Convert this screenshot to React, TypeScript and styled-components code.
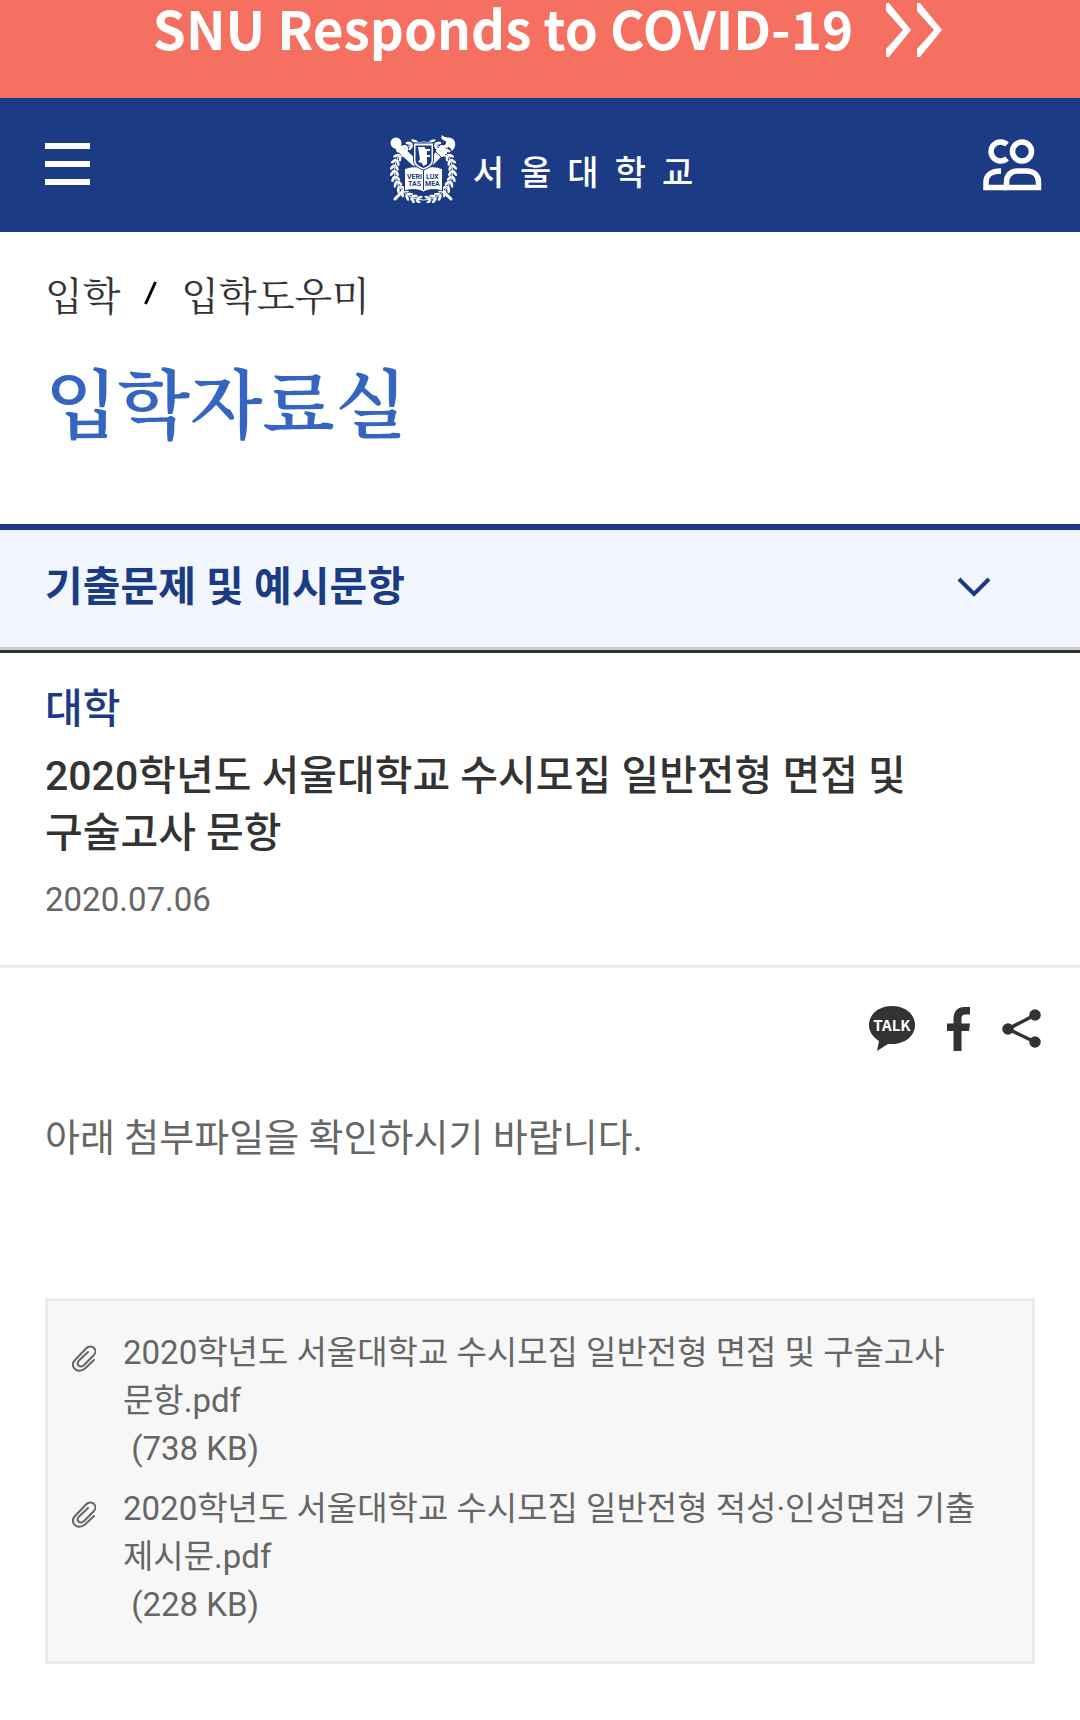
import React from "react";
import styled, { createGlobalStyle } from "styled-components";

const sans = `Roboto, "Noto Sans CJK KR", sans-serif`;
const serif = `"Noto Serif CJK KR", "Nanum Myeongjo", "Noto Sans CJK KR", serif`;
const navy = "#1c3b85";

const GlobalStyle = createGlobalStyle`
  *, *::before, *::after { box-sizing: border-box; }
  body { margin: 0; background: #fff; color: #333; font-family: ${sans}; }
  h1, h2, p, ul, ol { margin: 0; padding: 0; font-weight: 400; }
  ul, ol { list-style: none; }
  a { color: inherit; text-decoration: none; }
  button { padding: 0; border: 0; background: none; color: inherit; font: inherit; cursor: pointer; }
  svg { display: block; flex: none; }
`;

const Banner = styled.a`
  display: flex;
  align-items: flex-start;
  justify-content: center;
  gap: 32px;
  height: 98px;
  padding-left: 16px;
  background: #f57060;
  && { color: #fff; }
  font: 700 53px/54px "Noto Sans CJK KR", "Noto Sans", sans-serif;
`;

const BannerArrows = styled.svg`
  margin-top: 3px;
`;

const Header = styled.header`
  display: grid;
  grid-template-columns: 60px 1fr 60px;
  align-items: center;
  height: 134px;
  padding: 0 38px 0 45px;
  background: ${navy};
  color: #fff;
`;

const MenuButton = styled.button`
  width: 45px;
  height: 45px;
`;

const Logo = styled.a`
  display: flex;
  align-items: center;
  justify-content: center;
  gap: 16px;
  padding: 8px 4px 0 0;
`;

const LogoName = styled.span`
  display: flex;
  gap: 16px;
  padding-top: 4px;
  font: 500 34px/40px "Noto Sans CJK KR", sans-serif;
`;

const PageHead = styled.div`
  padding: 32px 45px 72px;
  font-family: ${serif};
`;

const Crumbs = styled.ol`
  display: flex;
  align-items: center;
  font-size: 39px;
  line-height: 58px;
`;

const Slash = styled.li`
  padding: 0 24px;
`;

const PageTitle = styled.h1`
  && { font-weight: 600; }
  margin-top: 26px;
  color: #3465c1;
  font-size: 75px;
  line-height: 104px;
`;

const CategoryButton = styled.button`
  display: flex;
  align-items: center;
  justify-content: space-between;
  width: 100%;
  height: 126px;
  && { padding: 0 88px 3px 45px; }
  && { border-top: 6px solid ${navy}; border-bottom: 3px solid #ccc; }
  && { background: #f2f7ff; color: ${navy}; }
  && { font-size: 41px; line-height: 57px; font-weight: 700; }
`;

const ArticleHead = styled.header`
  padding: 28px 45px 41px;
  border-top: 3px solid #333;
  border-bottom: 3px solid #ebebeb;
`;

const Category = styled.p`
  && { font-weight: 500; }
  color: ${navy};
  font-size: 41px;
  line-height: 57px;
`;

const ArticleTitle = styled.h2`
  && { font-weight: 500; }
  max-width: 880px;
  margin-top: 10px;
  font-size: 41px;
  line-height: 57px;
  word-break: keep-all;
`;

const PostDate = styled.time`
  display: block;
  margin-top: 14px;
  color: #666;
  font-size: 33px;
  line-height: 48px;
`;

const ShareRow = styled.div`
  display: flex;
  align-items: center;
  justify-content: flex-end;
  gap: 31px;
  padding: 38px 38px 0;
  color: #333;
`;

const Body = styled.p`
  padding: 56px 45px 0;
  color: #666;
  font-size: 38px;
  line-height: 60px;
`;

const Files = styled.ul`
  display: flex;
  flex-direction: column;
  gap: 12px;
  margin: 130px 45px 0;
  padding: 28px 24px 32px;
  border: 3px solid #ebebeb;
  background: #f7f7f7;
`;

const FileItem = styled.li`
  color: #666;
  font-size: 33px;
  line-height: 48px;
`;

const FileLink = styled.a`
  display: flex;
  gap: 27px;
`;

const ClipIcon = styled.svg`
  margin-top: 16px;
`;

const FileName = styled.span`
  display: block;
  word-break: keep-all;
`;

const FileSize = styled.span`
  display: block;
  white-space: pre;
`;

const leaves = Array.from({ length: 15 }, (_, i) => i);

function Seal() {
  return (
    <svg width="67" height="68" viewBox="0 0 67 68" fill="#fff" aria-hidden="true">
      <g stroke="#fff" strokeLinecap="round">
        <path d="M5 9 61 64" strokeWidth="3" />
        <path d="M57 11 5 64" strokeWidth="3" />
        <path d="M9 13 24 27M54 14 42 26" strokeWidth="7" />
      </g>
      <circle cx="6" cy="8" r="5.500" />
      <path d="m45 16 7-7 7 7-7 7z" stroke={navy} strokeWidth="1" />
      <path d="M52 0c4 4 7 1 11 4 4 4 2 9-1 12-1-4-5-5-8-5 3-3 3-5-1-6-2-1-2-3-1-5z" />
      <circle cx="33.500" cy="36" r="29" fill="none" stroke="#fff" strokeWidth="1" />
      {[0, 1].map((side) => (
        <g key={side} transform={side ? "translate(67 0) scale(-1 1)" : undefined}>
          {leaves.map((i) => (
            <g key={i} transform={`rotate(${-12 - i * 11} 33.5 36)`}>
              <ellipse cx="31" cy="4.800" rx="3.400" ry="1.400" transform="rotate(32 31 4.800)" />
              <ellipse cx="31" cy="9.400" rx="3.200" ry="1.300" transform="rotate(-32 31 9.400)" />
            </g>
          ))}
        </g>
      ))}
      <path d="M14.500 34c6-3 14-3 19 0 5-3 13-3 19 0v22c-6-2-14-2-19 1-5-3-13-3-19-1z" stroke={navy} />
      <path d="M33.500 35v20" stroke={navy} strokeWidth="1" />
      <g fill={navy} fontFamily="Roboto, sans-serif" fontWeight="700" fontSize="7">
        <text x="17" y="44">VERI</text>
        <text x="36" y="44">LUX</text>
        <text x="18" y="51">TAS</text>
        <text x="35" y="51">MEA</text>
      </g>
      <path d="M23.500 8h20v17c0 5-4 8-10 10-6-2-10-5-10-10z" stroke={navy} />
      <path d="M25.500 10.500h16V25c0 4-3 6-8 8-5-2-8-4-8-8z" fill={navy} />
      <path d="M28 12h6.500l1 2H40v2h-3v4h3v2h-3v7l-3.500 2-2-3-3.500-1 2-3z" />
    </svg>
  );
}

const files = [
  { name: "2020학년도 서울대학교 수시모집 일반전형 면접 및 구술고사 문항.pdf", size: "738 KB" },
  { name: "2020학년도 서울대학교 수시모집 일반전형 적성·인성면접 기출 제시문.pdf", size: "228 KB" },
];

export default function App() {
  return (
    <>
      <GlobalStyle />
      <Banner href="#covid">
        SNU Responds to COVID-19
        <BannerArrows width="58" height="54" viewBox="0 0 58 54" aria-hidden="true">
          <path fill="#fff" d="M1 0h3l22 27L4 54H1v-8l17-19L1 8zM32 0h3l22 27-22 27h-3v-8l17-19L32 8z" />
        </BannerArrows>
      </Banner>
      <Header>
        <MenuButton type="button" aria-label="메뉴">
          <svg width="45" height="45" viewBox="0 0 45 45" fill="#fff" aria-hidden="true">
            <path d="M0 0h45v6H0zM0 18h45v6H0zM0 36h45v6H0z" />
          </svg>
        </MenuButton>
        <Logo href="#home" aria-label="서울대학교">
          <Seal />
          <LogoName>
            {[..."서울대학교"].map((ch) => (
              <span key={ch}>{ch}</span>
            ))}
          </LogoName>
        </Logo>
        <button type="button" aria-label="사용자별 메뉴">
          <svg width="60" height="52" viewBox="0 0 60 52" fill="none" stroke="#fff" strokeWidth="5.500" aria-hidden="true">
            <circle cx="40" cy="12.500" r="9.500" />
            <path d="M25 5.500A9.500 9.500 0 1 0 25 19.500" />
            <path d="M24.500 48.500V43c0-6 4-11 11-11h9c8 0 12 5 12 11v5.500z" />
            <path d="M25 48.500H4V43c0-6 4-11 15-11" />
          </svg>
        </button>
      </Header>
      <main>
        <PageHead>
          <nav aria-label="현재 위치">
            <Crumbs>
              <li><a href="#admission">입학</a></li>
              <Slash aria-hidden="true">
                <svg width="13" height="24" viewBox="0 0 13 24" stroke="#000" strokeWidth="3" aria-hidden="true">
                  <path d="M11.500 1 1.500 23" />
                </svg>
              </Slash>
              <li><a href="#guide">입학도우미</a></li>
            </Crumbs>
          </nav>
          <PageTitle>입학자료실</PageTitle>
        </PageHead>
        <CategoryButton type="button" aria-expanded="false">
          기출문제 및 예시문항
          <svg width="36" height="22" viewBox="0 0 36 22" fill="none" stroke={navy} strokeWidth="4" aria-hidden="true">
            <path d="m3 3 15 15L33 3" />
          </svg>
        </CategoryButton>
        <article>
          <ArticleHead>
            <Category>대학</Category>
            <ArticleTitle>2020학년도 서울대학교 수시모집 일반전형 면접 및 구술고사 문항</ArticleTitle>
            <PostDate dateTime="2020-07-06">2020.07.06</PostDate>
          </ArticleHead>
          <ShareRow>
            <button type="button" aria-label="카카오톡 공유">
              <svg width="48" height="46" viewBox="0 0 48 46" fill="#333" aria-hidden="true">
                <path d="M24 0C11 0 1 8 1 19c0 7 4 12 10 16L9 45l11-7h4c13 0 23-8 23-19S37 0 24 0z" />
                <text x="24" y="25" textAnchor="middle" fill="#fff" fontFamily="'Noto Sans CJK KR', sans-serif" fontWeight="700" fontSize="15">TALK</text>
              </svg>
            </button>
            <button type="button" aria-label="페이스북 공유">
              <svg width="24" height="44" viewBox="0 0 24 44" fill="#333" aria-hidden="true">
                <path d="M6.500 44V24H0v-7.500h6.500V12C6.500 4 11 0 17 0h6v7.500h-4.500c-3 0-4 1.500-4 4v5H23L22 24h-7.500v20z" />
              </svg>
            </button>
            <button type="button" aria-label="링크 공유">
              <svg width="40" height="40" viewBox="0 0 40 40" fill="#333" stroke="#333" strokeWidth="3.500" aria-hidden="true">
                <path d="M33 6 6 20l27 13" fill="none" />
                <circle cx="33" cy="6" r="4" />
                <circle cx="6" cy="20" r="4" />
                <circle cx="33" cy="33" r="4" />
              </svg>
            </button>
          </ShareRow>
          <Body>아래 첨부파일을 확인하시기 바랍니다.</Body>
          <Files>
            {files.map((file) => (
              <FileItem key={file.size}>
                <FileLink href="#download">
                  <ClipIcon width="24" height="27" viewBox="0 0 24 27" fill="none" stroke="#666" strokeWidth="2" strokeLinecap="round" aria-hidden="true">
                    <path d="M22 15 13 23.500C9 27 4 26 2 23c-2-3-1-6 1-8L14 3.500c2.500-2.500 6-2.500 8-.500s2 5-.500 7.500L12 20c-2 2-4 2-5.500.500S5.500 17 7 15.500L16 7" />
                  </ClipIcon>
                  <span>
                    <FileName>{file.name}</FileName>
                    <FileSize>{` (${file.size})`}</FileSize>
                  </span>
                </FileLink>
              </FileItem>
            ))}
          </Files>
        </article>
      </main>
    </>
  );
}
